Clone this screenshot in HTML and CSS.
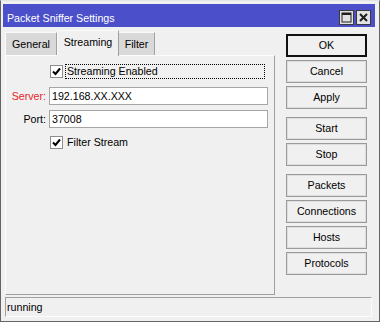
FILE: index.html
```html
<!DOCTYPE html>
<html lang="en">
<head>
    <meta charset="UTF-8">
    <title>Packet Sniffer Settings</title>
    <link rel="stylesheet" href="styles.css">
</head>
<body>

    <div class="window">
        <div class="titlebar">
            <span class="title">Packet Sniffer Settings</span>
            <div class="controls">
                <span class="ctl">
                    <svg width="11" height="11" viewBox="0 0 11 11">
                        <rect x="1" y="1" width="9" height="9" fill="none" stroke="#1e1e1e" stroke-width="1"/>
                        <rect x="1" y="1" width="9" height="2" fill="#1e1e1e"/>
                    </svg>
                </span>
                <span class="ctl">
                    <svg width="11" height="11" viewBox="0 0 11 11">
                        <path d="M2 2 L9 9 M9 2 L2 9" stroke="#1e1e1e" stroke-width="2"/>
                    </svg>
                </span>
            </div>
        </div>

        <div class="main">
            <div class="left">
                <div class="tabs">
                    <div class="tab tab-general">General</div>
                    <div class="tab tab-streaming active">Streaming</div>
                    <div class="tab tab-filter">Filter</div>
                </div>

                <div class="panel">
                    <div class="row check-row">
                        <span class="label"></span>
                        <span class="checkbox">
                            <svg width="11" height="11" viewBox="0 0 11 11">
                                <polyline points="2,5.5 4.5,8 9,2.5" fill="none" stroke="#000" stroke-width="2"/>
                            </svg>
                        </span>
                        <span class="check-text focused">Streaming Enabled</span>
                    </div>

                    <div class="row field-row">
                        <span class="label required">Server:</span>
                        <span class="input">192.168.XX.XXX</span>
                    </div>

                    <div class="row field-row port-row">
                        <span class="label">Port:</span>
                        <span class="input">37008</span>
                    </div>

                    <div class="row check-row filter-row">
                        <span class="label"></span>
                        <span class="checkbox">
                            <svg width="11" height="11" viewBox="0 0 11 11">
                                <polyline points="2,5.5 4.5,8 9,2.5" fill="none" stroke="#000" stroke-width="2"/>
                            </svg>
                        </span>
                        <span class="check-text">Filter Stream</span>
                    </div>
                </div>
            </div>

            <div class="side">
                <div class="group">
                    <div class="btn default">OK</div>
                    <div class="btn">Cancel</div>
                    <div class="btn">Apply</div>
                </div>
                <div class="group">
                    <div class="btn">Start</div>
                    <div class="btn">Stop</div>
                </div>
                <div class="group">
                    <div class="btn">Packets</div>
                    <div class="btn">Connections</div>
                    <div class="btn">Hosts</div>
                    <div class="btn">Protocols</div>
                </div>
            </div>
        </div>

        <div class="status">running</div>
    </div>

</body>
</html>
```

FILE: styles.css
```css
body {
    margin: 0;
    padding: 0;
    background-color: #f0f0f0;
    font-family: 'Liberation Sans', Arial, sans-serif;
    font-size: 8pt;
    color: #000;
}

.window {
    width: 380px;
    height: 322px;
    box-sizing: border-box;
    border: 1px solid #646464;
    border-top-color: #e4e4e4;
    padding: 3px 4px 0 2px;
    background-color: #f0f0f0;
}

.titlebar {
    height: 23px;
    background-color: #4b4fc9;
    display: flex;
    justify-content: space-between;
    align-items: flex-end;
}

.title {
    color: white;
    line-height: 13px;
    padding: 0 0 2px 4px;
    align-self: flex-start;
    margin-top: 8px;
}

.controls {
    display: flex;
    gap: 2px;
    padding: 0 4px 2px 0;
}

.ctl {
    width: 13px;
    height: 13px;
    border: 1px solid #3a3a3a;
    background-color: #e2e2e2;
    display: flex;
    align-items: center;
    justify-content: center;
}

.main {
    display: flex;
    padding: 3px 0 0 2px;
}

.left {
    width: 270px;
}

.tabs {
    height: 25px;
    display: flex;
    align-items: flex-end;
}

.tab {
    height: 23px;
    box-sizing: border-box;
    line-height: 22px;
    text-align: center;
    background-color: #d9d9d9;
    border-top: 1px solid #fafafa;
    border-left: 1px solid #fafafa;
    border-right: 1px solid #a0a0a0;
}

.tab-general {
    width: 52px;
}

.tab-streaming {
    width: 62px;
}

.tab-filter {
    width: 36px;
    border-left: none;
}

.tab.active {
    height: 26px;
    line-height: 23px;
    margin-bottom: -1px;
    background-color: #f0f0f0;
    position: relative;
    z-index: 1;
}

.panel {
    height: 240px;
    box-sizing: border-box;
    border: 1px solid #a0a0a0;
    border-top-color: #fcfcfc;
    border-left-color: #fcfcfc;
    padding: 8px 6px 0 0;
}

.row {
    display: flex;
    align-items: center;
}

.label {
    width: 40px;
    margin-right: 3px;
    text-align: right;
    flex-shrink: 0;
}

.required {
    color: #e8262c;
}

.check-row {
    height: 15px;
}

.filter-row {
    margin-top: 7px;
}

.checkbox {
    width: 11px;
    height: 11px;
    margin-left: 1px;
    border: 1px solid #8e8e8e;
    background-color: #fff;
    display: flex;
    flex-shrink: 0;
}

.check-text {
    margin-left: 2px;
    line-height: 13px;
    padding-left: 1px;
    border: 1px solid transparent;
}

.check-text.focused {
    flex: 1;
    margin-right: 3px;
    border: 1px dotted #000;
}

.field-row {
    margin-top: 8px;
}

.port-row {
    margin-top: 5px;
}

.input {
    flex: 1;
    height: 18px;
    box-sizing: border-box;
    border: 1px solid #a6a6a6;
    background-color: #fff;
    line-height: 16px;
    padding-left: 2px;
}

.side {
    width: 81px;
    margin-left: 11px;
    padding-top: 4px;
    display: flex;
    flex-direction: column;
    gap: 8px;
}

.group {
    display: flex;
    flex-direction: column;
    gap: 3px;
}

.btn {
    height: 23px;
    box-sizing: border-box;
    border: 1px solid #9a9a9a;
    box-shadow: inset 0 0 0 1px #dedede;
    background-color: #f0f0f0;
    text-align: center;
    line-height: 21px;
}

.btn.default {
    border: 2px solid #111;
    box-shadow: none;
    line-height: 19px;
}

.status {
    width: 367px;
    height: 20px;
    box-sizing: border-box;
    margin: 2px 0 0 2px;
    border: 1px solid #fcfcfc;
    border-top-color: #a0a0a0;
    border-left-color: #a0a0a0;
    line-height: 18px;
    padding-left: 1px;
}
```
